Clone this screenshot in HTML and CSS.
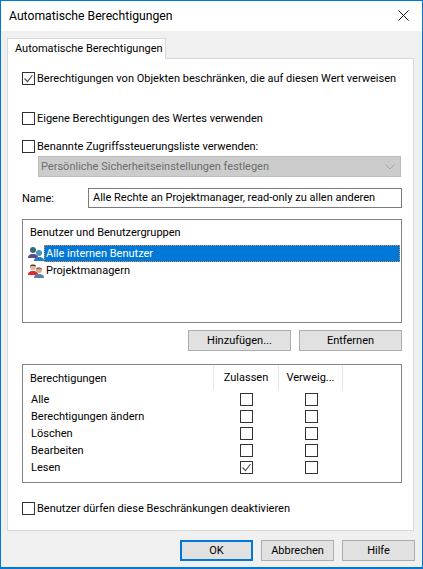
FILE: index.html
```html
<!DOCTYPE html>
<html lang="de">
<head>
  <meta charset="UTF-8">
  <title>Automatische Berechtigungen</title>
  <link rel="stylesheet" href="styles.css">
</head>
<body>
  <div class="dialog">
    <div class="titlebar">
      <span class="title">Automatische Berechtigungen</span>
      <svg class="close" width="12" height="12" viewBox="0 0 12 12"><path d="M.5.5l10 10M10.5.5l-10 10" stroke="#111" fill="none"/></svg>
    </div>

    <div class="tabstrip">
      <div class="tab">Automatische Berechtigungen</div>
    </div>

    <div class="panel">
      <label class="check-row first">
        <span class="check"><svg width="11" height="11" viewBox="0 0 11 11"><path d="M1.5 5.5l3 3 5-6.5" stroke="#555" stroke-width="1.2" fill="none"/></svg></span>
        Berechtigungen von Objekten beschränken, die auf diesen Wert verweisen
      </label>
      <label class="check-row second"><span class="check"></span>Eigene Berechtigungen des Wertes verwenden</label>
      <label class="check-row third"><span class="check"></span>Benannte Zugriffssteuerungsliste verwenden:</label>

      <div class="select-box">
        <span>Persönliche Sicherheitseinstellungen festlegen</span>
        <svg width="10" height="6" viewBox="0 0 10 6"><path d="M.5.5L5 5 9.5.5" stroke="#a2a2a2" fill="none"/></svg>
      </div>

      <div class="name-row">
        <span class="name-label">Name:</span>
        <div class="name-input">Alle Rechte an Projektmanager, read-only zu allen anderen</div>
      </div>

      <div class="users-box">
        <div class="box-head">Benutzer und Benutzergruppen</div>
        <div class="user-row">
          <svg class="user-icon" width="16" height="16" viewBox="0 0 16 16">
            <circle cx="5" cy="4" r="3" fill="#2f6f7c"/>
            <path d="M0 12c0-3 2-4 5-4s5 1 5 4z" fill="#5a4a8c"/>
            <circle cx="11" cy="7" r="3" fill="#4f93b5"/>
            <path d="M6 15c0-3 2-4 5-4s5 1 5 4z" fill="#1f7fc4"/>
          </svg>
          <span class="user-name selected">Alle internen Benutzer</span>
        </div>
        <div class="user-row">
          <svg class="user-icon" width="16" height="16" viewBox="0 0 16 16">
            <circle cx="5" cy="4" r="3" fill="#e4b49c"/>
            <path d="M2 3.5C2 1 8 1 8 3.5 6 2.5 4 2.5 2 3.5z" fill="#2c2420"/>
            <path d="M0 12c0-3 2-4 5-4s5 1 5 4z" fill="#d92b2b"/>
            <circle cx="11" cy="7" r="3" fill="#d8a88c"/>
            <path d="M8 6.5C8 4 14 4 14 6.5 12 5.5 10 5.5 8 6.5z" fill="#7a5a44"/>
            <path d="M6 15c0-3 2-4 5-4s5 1 5 4z" fill="#5f7f9f"/>
          </svg>
          <span class="user-name">Projektmanagern</span>
        </div>
      </div>

      <div class="user-buttons">
        <button class="btn">Hinzufügen...</button>
        <button class="btn">Entfernen</button>
      </div>

      <div class="perm-box">
        <div class="perm-head">
          <span class="perm-name">Berechtigungen</span>
          <span class="perm-col">Zulassen</span>
          <span class="perm-col">Verweig...</span>
        </div>
        <div class="perm-row"><span class="perm-name">Alle</span><span class="cell"><span class="check"></span></span><span class="cell"><span class="check"></span></span></div>
        <div class="perm-row"><span class="perm-name">Berechtigungen ändern</span><span class="cell"><span class="check"></span></span><span class="cell"><span class="check"></span></span></div>
        <div class="perm-row"><span class="perm-name">Löschen</span><span class="cell"><span class="check"></span></span><span class="cell"><span class="check"></span></span></div>
        <div class="perm-row"><span class="perm-name">Bearbeiten</span><span class="cell"><span class="check"></span></span><span class="cell"><span class="check"></span></span></div>
        <div class="perm-row">
          <span class="perm-name">Lesen</span>
          <span class="cell"><span class="check"><svg width="11" height="11" viewBox="0 0 11 11"><path d="M1.5 5.5l3 3 5-6.5" stroke="#555" stroke-width="1.2" fill="none"/></svg></span></span>
          <span class="cell"><span class="check"></span></span>
        </div>
      </div>

      <label class="check-row last"><span class="check"></span>Benutzer dürfen diese Beschränkungen deaktivieren</label>
    </div>

    <div class="footer">
      <button class="btn default">OK</button>
      <button class="btn">Abbrechen</button>
      <button class="btn">Hilfe</button>
    </div>
  </div>
</body>
</html>
```

FILE: styles.css
```css
* {
  box-sizing: border-box;
}
body {
  margin: 0;
  font-family: Roboto, "Open Sans", Arial, sans-serif;
  font-size: 11px;
  color: #000;
}
.dialog {
  width: 423px;
  height: 569px;
  border: 1px solid #0078d7;
  border-bottom-width: 2px;
  background: #f0f0f0;
  display: flex;
  flex-direction: column;
}
.titlebar {
  height: 30px;
  background: #fff;
  display: flex;
  align-items: center;
  justify-content: space-between;
  padding: 0 12px 0 8px;
  font-size: 12.2px;
}
.close {
  margin-top: -1px;
}
.tabstrip {
  padding: 7px 0 0 6px;
  height: 27px;
  display: flex;
}
.tab {
  width: 159px;
  height: 21px;
  background: #fff;
  border: 1px solid #d9d9d9;
  border-bottom: none;
  padding-left: 7px;
  line-height: 20px;
  white-space: nowrap;
  position: relative;
  z-index: 1;
}
.panel {
  width: 407px;
  height: 473px;
  margin-left: 6px;
  background: #fff;
  border: 1px solid #d9d9d9;
  padding: 0 0 0 14px;
}
.check-row {
  display: flex;
  align-items: center;
  gap: 2px;
  height: 14px;
  white-space: nowrap;
}
.check-row.first {
  margin-top: 12px;
}
.check-row.second {
  margin-top: 26px;
}
.check-row.third {
  margin-top: 14px;
}
.check-row.last {
  margin-top: 18px;
}
.check {
  width: 13px;
  height: 13px;
  flex: none;
  background: #fff;
  border: 1px solid #333;
  display: flex;
  align-items: center;
  justify-content: center;
}
.select-box {
  width: 363px;
  height: 21px;
  margin: 3px 0 0 16px;
  background: #cccccc;
  border: 1px solid #bcbcbc;
  color: #6d6d6d;
  padding: 0 5px 0 2px;
  display: flex;
  align-items: center;
  justify-content: space-between;
}
.name-row {
  display: flex;
  align-items: center;
  margin-top: 11px;
}
.name-label {
  width: 66px;
}
.name-input {
  width: 314px;
  height: 20px;
  border: 1px solid #7a7a7a;
  padding-left: 4px;
  line-height: 18px;
  white-space: nowrap;
}
.users-box {
  width: 380px;
  height: 104px;
  margin-top: 11px;
  border: 1px solid #82828b;
}
.box-head {
  height: 25px;
  padding: 6px 0 0 7px;
}
.user-row {
  height: 17px;
  display: flex;
  align-items: center;
  padding-left: 5px;
}
.user-icon {
  flex: none;
}
.user-name {
  flex: 1;
  height: 17px;
  line-height: 18px;
  padding-left: 2px;
  margin-right: 1px;
}
.user-name.selected {
  background: #0078d7;
  color: #fff;
  outline: 1px dotted #d98a3a;
  outline-offset: -1px;
}
.user-buttons {
  width: 380px;
  display: flex;
  justify-content: flex-end;
  gap: 8px;
  margin-top: 7px;
}
.btn {
  height: 21px;
  width: 103px;
  padding: 0;
  background: #e1e1e1;
  border: 1px solid #adadad;
  font-family: inherit;
  font-size: inherit;
  color: #000;
}
.perm-box {
  width: 380px;
  height: 119px;
  margin-top: 13px;
  border: 1px solid #82828b;
}
.perm-head, .perm-row {
  display: grid;
  grid-template-columns: 190px 65px 65px;
  align-items: center;
}
.perm-head {
  height: 24px;
  margin-top: 1px;
  margin-bottom: 1px;
}
.perm-head .perm-name {
  padding-left: 7px;
}
.perm-col {
  height: 24px;
  line-height: 24px;
  text-align: center;
  border-left: 1px solid #e5e5e5;
}
.perm-col:last-child {
  border-right: 1px solid #e5e5e5;
}
.perm-row {
  height: 17px;
}
.perm-row .perm-name {
  padding-left: 8px;
}
.cell {
  display: flex;
  justify-content: center;
  padding-left: 2px;
}
.footer {
  display: flex;
  justify-content: flex-end;
  align-items: flex-start;
  padding: 9px 7px 0 0;
  gap: 8px;
}
.footer .btn {
  width: 73px;
}
.footer .btn.default {
  border: 2px solid #0078d7;
}
```
